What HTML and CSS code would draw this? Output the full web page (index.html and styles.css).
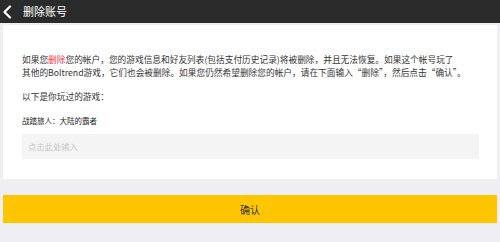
FILE: index.html
```html
<!DOCTYPE html>
<html lang="zh">
<head>
<meta charset="utf-8">
<link rel="stylesheet" href="styles.css">
</head>
<body>
<header class="topbar">
  <svg class="back" width="10" height="14" viewBox="0 0 10 14"><path d="M8 1.5 L2.5 7 L8 12.5" fill="none" stroke="#fff" stroke-width="2.2" stroke-linecap="round" stroke-linejoin="round"/></svg>
  <span class="title">删除账号</span>
</header>
<main class="page">
  <section class="card">
    <p class="notice">如果您<span class="red">删除</span>您的帐户，您的游戏信息和好友列表(包括支付历史记录)将被删除，并且无法恢复。如果这个帐号玩了<br>其他的Boltrend游戏，它们也会被删除。如果您仍然希望删除您的帐户，请在下面输入“删除”，然后点击“确认”。</p>
    <p class="label">以下是你玩过的游戏：</p>
    <p class="game">战踏旅人：大陆的霸者</p>
    <div class="input">点击此处输入</div>
  </section>
  <button class="confirm">确认</button>
</main>
</body>
</html>
```
FILE: styles.css
```css
html, body {
  margin: 0;
  padding: 0;
  background: #efeff3;
  font-family: "Noto Sans CJK SC", "Noto Sans", sans-serif;
  color: #333;
}
.topbar {
  height: 23px;
  background: #2b2b2b;
  display: flex;
  align-items: center;
  padding-left: 2px;
}
.back {
  display: block;
}
.title {
  margin-left: 11px;
  color: #fff;
  font-size: 11px;
  line-height: 23px;
}
.page {
  padding: 2px 3px 0;
}
.card {
  background: #fff;
  padding: 29px 19px 20px 19px;
}
.notice {
  margin: 0;
  font-size: 8.7px;
  line-height: 12.5px;
  color: #333;
  white-space: nowrap;
}
.red {
  color: #e8394a;
}
.label {
  margin: 12px 0 0;
  font-size: 8.7px;
  line-height: 12px;
}
.game {
  margin: 13px 0 0;
  font-size: 7.5px;
  line-height: 10px;
  color: #222;
}
.input {
  margin-top: 8px;
  height: 25px;
  width: 457px;
  background: #f4f4f4;
  color: #c8c8c8;
  font-size: 8.3px;
  line-height: 25px;
  padding-left: 6px;
  box-sizing: border-box;
}
.confirm {
  display: block;
  width: 100%;
  margin-top: 16px;
  height: 28px;
  border: 0;
  background: #ffc600;
  color: #333;
  font-family: "Noto Sans CJK SC", sans-serif;
  font-size: 10px;
  padding: 0;
}
```
